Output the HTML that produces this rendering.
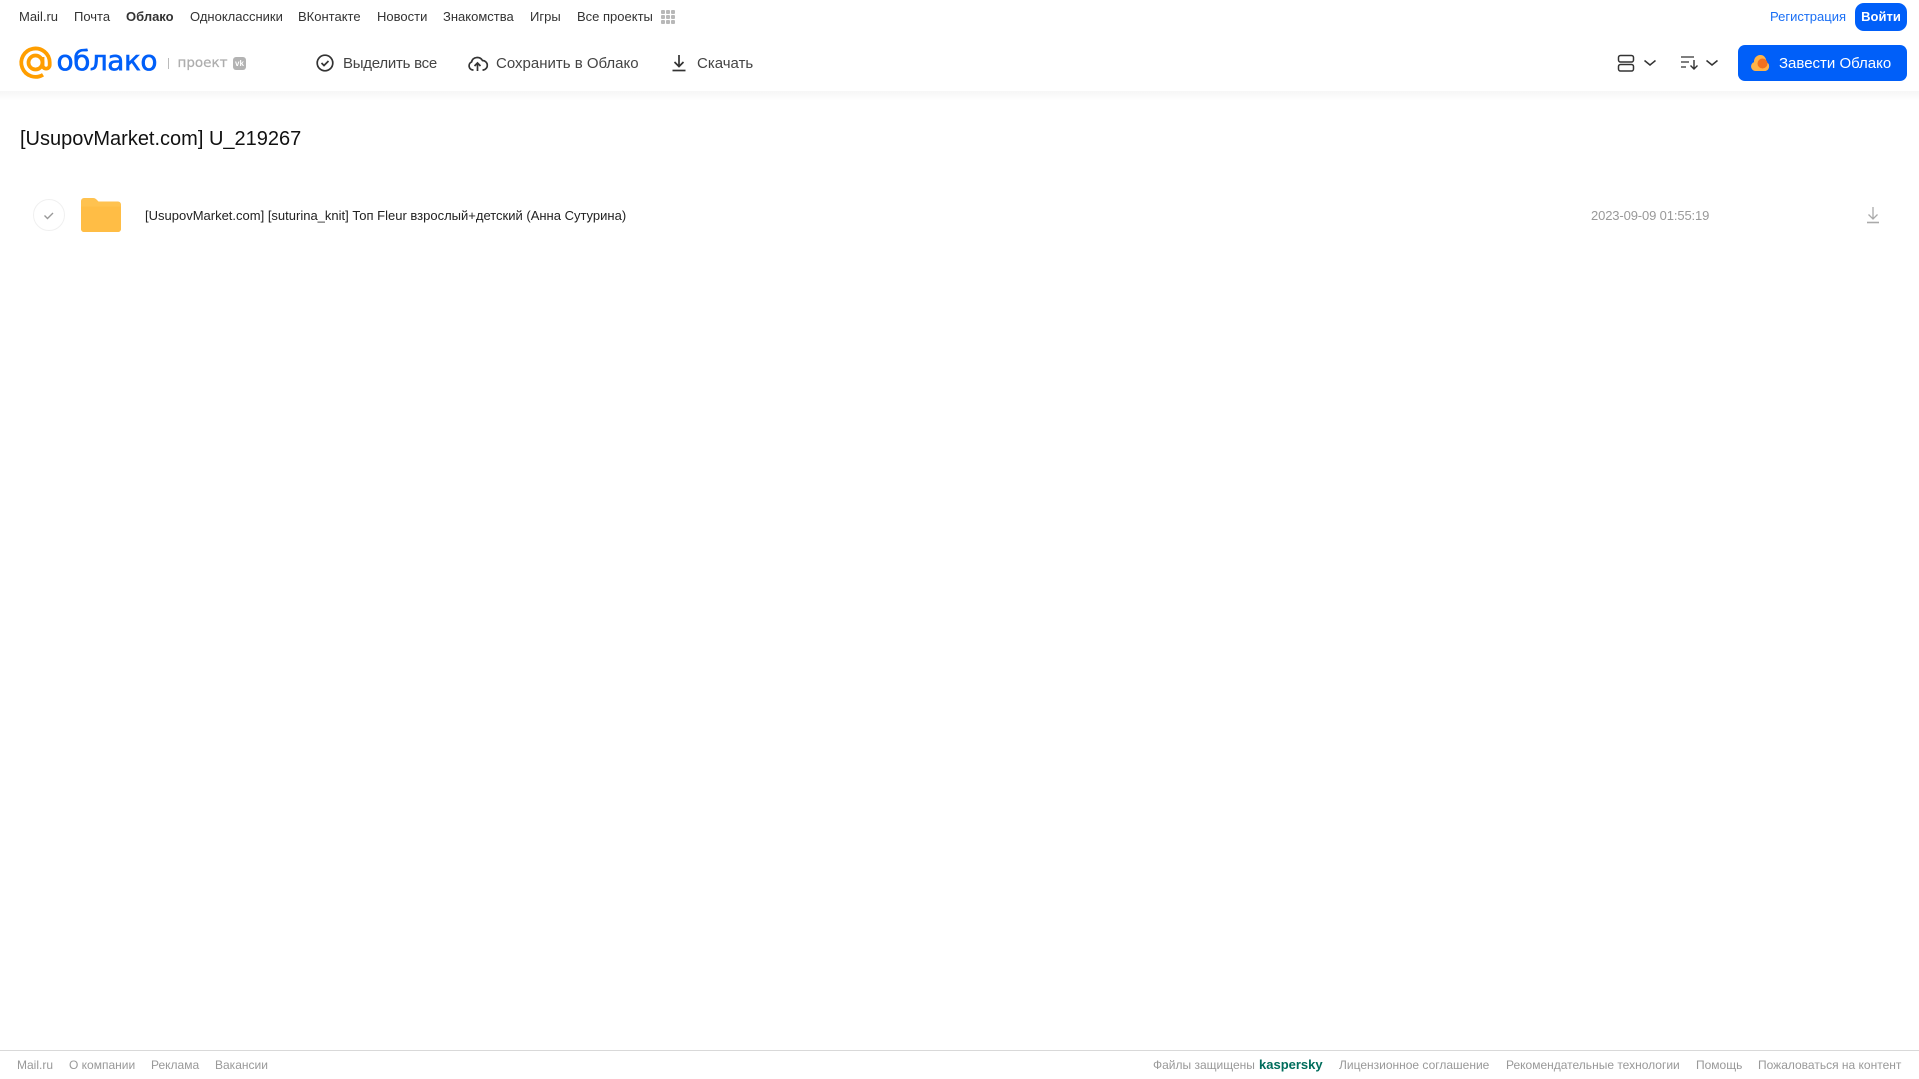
<!DOCTYPE html>
<html lang="ru">
<head>
<meta charset="utf-8">
<title>Облако</title>
<style>
html,body{margin:0;padding:0;background:#fff;}
body{width:1919px;height:1079px;position:relative;overflow:hidden;font-family:"Liberation Sans",Arial,sans-serif;}
.t{position:absolute;white-space:nowrap;line-height:16px;}
.n{font-size:13px;top:9px;color:#333;}
.b{font-size:15px;top:56px;color:#444;}
.f{font-size:12px;top:1057px;color:#999;}
svg{position:absolute;overflow:visible;}
</style>
</head>
<body>
<div style="position:absolute;left:0;top:91px;width:1919px;height:10px;background:linear-gradient(#f6f6f6,#fff)"></div>

<span class="t n" style="left:19px">Mail.ru</span>
<span class="t n" style="left:74px">Почта</span>
<span class="t n" style="left:126px;font-weight:700">Облако</span>
<span class="t n" style="left:190px">Одноклассники</span>
<span class="t n" style="left:298px">ВКонтакте</span>
<span class="t n" style="left:377px">Новости</span>
<span class="t n" style="left:443px">Знакомства</span>
<span class="t n" style="left:530px">Игры</span>
<span class="t n" style="left:577px">Все проекты</span>
<svg style="left:0;top:0" width="1919" height="100" fill="#b8b8b8">
<rect x="661" y="10" width="4" height="4" rx="1"/><rect x="666" y="10" width="4" height="4" rx="1"/><rect x="671" y="10" width="4" height="4" rx="1"/>
<rect x="661" y="15" width="4" height="4" rx="1"/><rect x="666" y="15" width="4" height="4" rx="1"/><rect x="671" y="15" width="4" height="4" rx="1"/>
<rect x="661" y="20" width="4" height="4" rx="1"/><rect x="666" y="20" width="4" height="4" rx="1"/><rect x="671" y="20" width="4" height="4" rx="1"/>
</svg>

<svg style="left:0;top:0" width="100" height="100" fill="none" stroke="#ff9e00" stroke-width="3.8">
<circle cx="35.5" cy="62.5" r="7"/>
<path d="M42.5 57v8a3.6 3.6 0 0 0 7.2 0v-2.500A14.200 14.200 0 1 0 43 74.700"/>
</svg>
<span class="t" style="left:56.500px;top:43px;line-height:36px;font-family:'DejaVu Sans','Liberation Sans',sans-serif;font-size:28px;color:#005ff9;-webkit-text-stroke:.6px #005ff9;letter-spacing:-.5px">облако</span>
<div style="position:absolute;left:168px;top:58px;width:1px;height:11px;background:#bbb"></div>
<span class="t" style="left:177.500px;top:55px;font-family:'DejaVu Sans','Liberation Sans',sans-serif;font-size:13.500px;color:#adadad;-webkit-text-stroke:.25px #adadad">проект</span>
<div style="position:absolute;left:233px;top:57px;width:13px;height:13px;border-radius:3px;background:#b3b3b3;color:#fff;font-size:8px;font-weight:700;line-height:13px;text-align:center">vk</div>

<svg style="left:0;top:0" width="800" height="100" fill="none" stroke="#333" stroke-width="1.700">
<circle cx="325" cy="63" r="7.800"/>
<path d="M321.500 63l2.500 2.500 4.500-4.500"/>
<path d="M473.500 70h-.500a4.200 4.200 0 0 1-1.500-8 6 6 0 0 1 11-1.500 4.800 4.800 0 0 1 1 9.500h-1"/>
<path d="M477.500 71v-8M474.500 66l3-3 3 3"/>
<path d="M679 55v11.500M674.500 62l4.500 4.500 4.500-4.500"/>
<path d="M672.500 70.500h13"/>
</svg>
<span class="t b" style="left:343px;letter-spacing:-.25px">Выделить все</span>
<span class="t b" style="left:496px">Сохранить в Облако</span>
<span class="t b" style="left:697px">Скачать</span>

<span class="t n" style="left:1770px;color:#1a6ff5">Регистрация</span>
<div style="position:absolute;left:1855px;top:3px;width:52px;height:28px;border-radius:9px;background:#005ff9;color:#fff;font-size:13px;font-weight:700;line-height:27px;text-align:center">Войти</div>

<svg style="left:0;top:0" width="1919" height="100" fill="none" stroke="#333" stroke-width="1.500">
<rect x="1618.500" y="55.500" width="15" height="6.500" rx="2"/>
<rect x="1618.500" y="64.500" width="15" height="6.500" rx="2"/>
<path d="M1644.500 60.500l5.500 4.500 5.500-4.500"/>
<path d="M1681 57h13M1681 62h8M1681 67h5" stroke-width="1.200"/>
<path d="M1694 60v9M1690.500 65.500l3.500 3.500 3.500-3.500" stroke-width="1.400"/>
<path d="M1706.500 60.500l5.500 4.500 5.500-4.500"/>
</svg>
<div style="position:absolute;left:1738px;top:45px;width:169px;height:36px;border-radius:7px;background:#005ff9"></div>
<svg style="left:0;top:0" width="1919" height="100">
<path d="M1755.500 71a4.600 4.600 0 0 1-1.500-8.900 6.500 6.500 0 0 1 9-6.600 6 6 0 0 1 3 6.500 4.700 4.700 0 0 1-.500 9z" fill="#ffb347"/>
<circle cx="1762.500" cy="63.500" r="5" fill="#f2701f"/>
</svg>
<span class="t b" style="left:1779px;color:#fff">Завести Облако</span>

<span class="t" style="left:20px;top:127px;line-height:24px;font-size:20px;color:#111">[UsupovMarket.com] U_219267</span>

<svg style="left:0;top:190px" width="140" height="50" fill="none">
<circle cx="49" cy="25" r="15.500" stroke="#f0f0f0"/>
<path d="M44.500 25.500l3 3 5.500-5.500" stroke="#999" stroke-width="1.400"/>
<path d="M81 11a3 3 0 0 1 3-3h9c2 0 3 1 4 2l1.500 1.500H118a3 3 0 0 1 3 3V39a3 3 0 0 1-3 3H84a3 3 0 0 1-3-3z" fill="#ffc24f"/>
<path d="M81 16.500h40V39a3 3 0 0 1-3 3H84a3 3 0 0 1-3-3z" fill="#ffbd45"/>
</svg>
<span class="t" style="left:145px;top:208px;font-size:13px;color:#222">[UsupovMarket.com] [suturina_knit] Топ Fleur взрослый+детский (Анна Сутурина)</span>
<span class="t" style="left:1591px;top:208px;font-size:13px;color:#999;letter-spacing:-.13px">2023-09-09 01:55:19</span>
<svg style="left:0;top:190px" width="1919" height="50" fill="none" stroke="#aaa" stroke-width="1.300">
<path d="M1873 17v12M1868.500 24.500l4.500 4.500 4.500-4.500"/>
<path d="M1867 32.500h12" stroke-width="1.600"/>
</svg>

<div style="position:absolute;left:0;top:1050px;width:1919px;height:1px;background:#d9d9d9"></div>
<span class="t f" style="left:17px">Mail.ru</span>
<span class="t f" style="left:69px">О компании</span>
<span class="t f" style="left:151px">Реклама</span>
<span class="t f" style="left:215px">Вакансии</span>
<span class="t f" style="left:1153px">Файлы защищены</span>
<span class="t f" style="left:1259px;font-size:13px;font-weight:700;color:#006d5c">kaspersky</span>
<span class="t f" style="left:1339px">Лицензионное соглашение</span>
<span class="t f" style="left:1506px">Рекомендательные технологии</span>
<span class="t f" style="left:1696px">Помощь</span>
<span class="t f" style="left:1758px">Пожаловаться на контент</span>
</body>
</html>
